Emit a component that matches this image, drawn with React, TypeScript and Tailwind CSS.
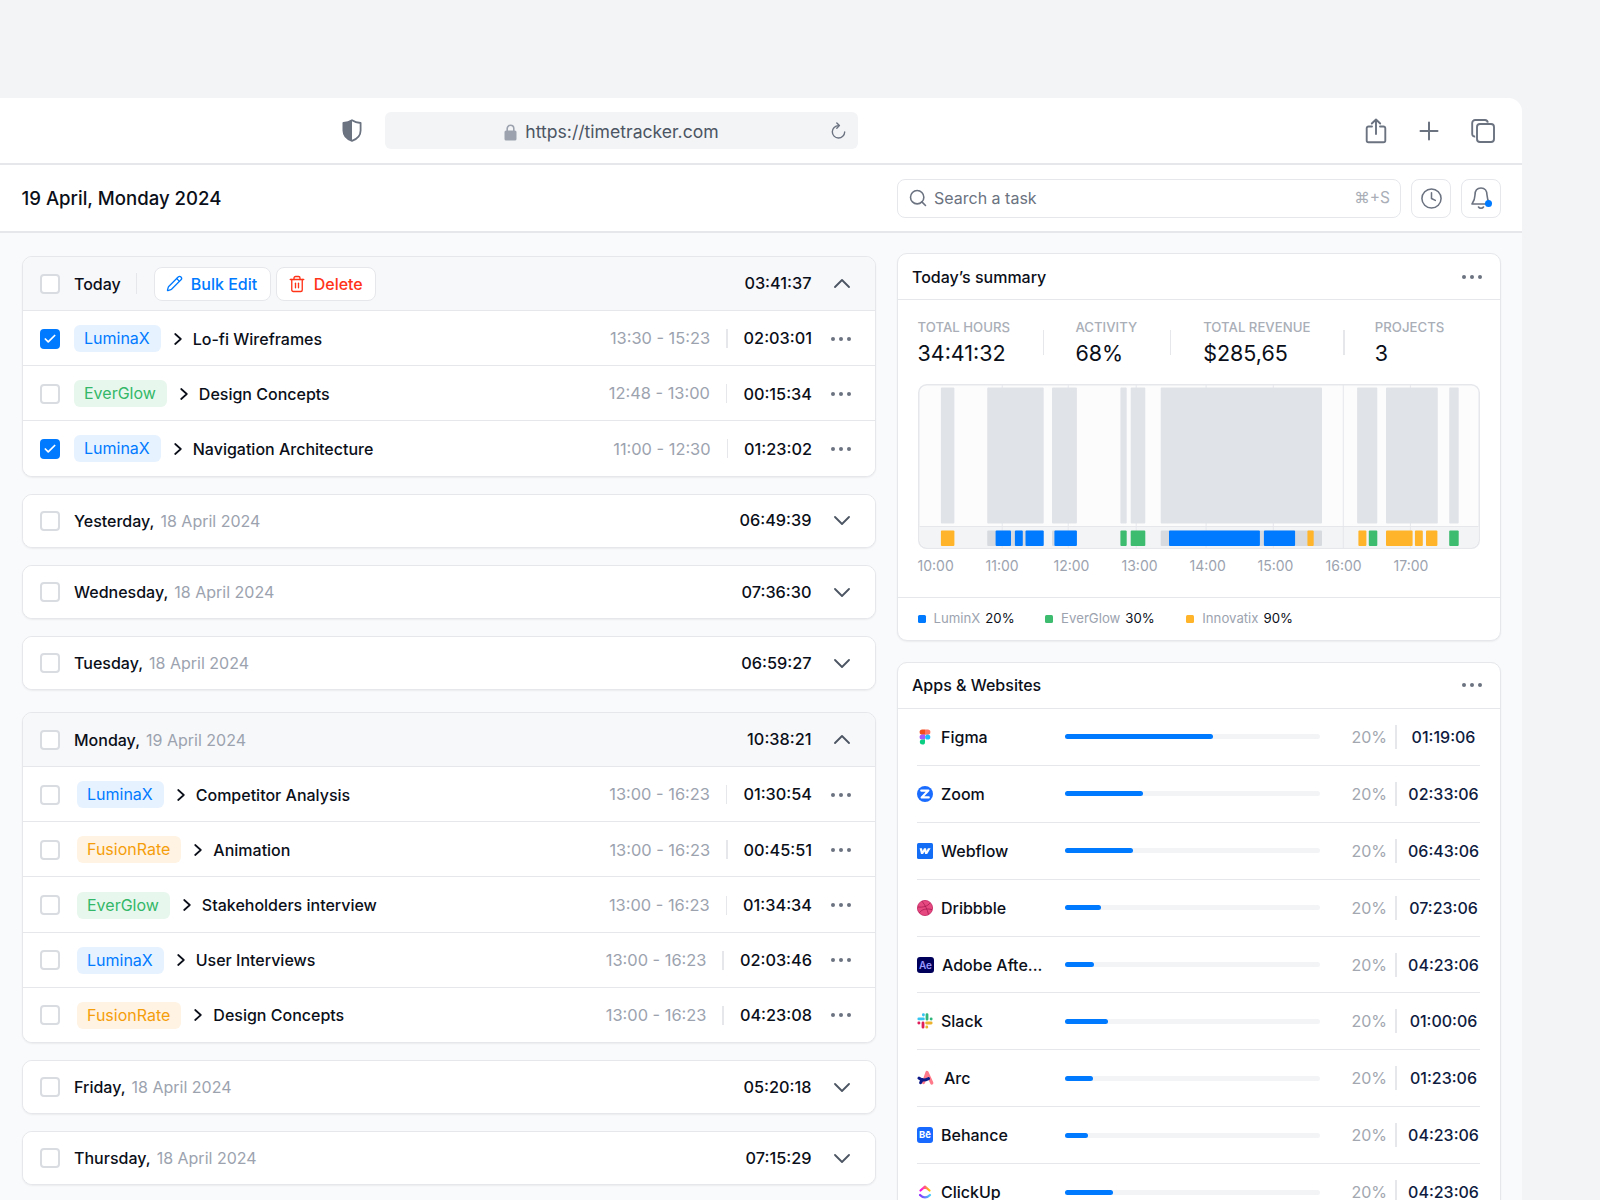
import React from "react";
import { Check, Search, Clock, Pencil, Trash2 } from "lucide-react";

const tagStyles: Record<string, string> = {
  LuminaX: "bg-[#e6f2ff] text-[#007aff]",
  EverGlow: "bg-[#e8f7ee] text-[#34b768]",
  FusionRate: "bg-[#fff3e3] text-[#f59e0b]",
};

function Box({ checked }: { checked?: boolean }) {
  if (checked) {
    return (
      <span className="flex h-5 w-5 shrink-0 items-center justify-center rounded-[4px] bg-[#007aff]">
        <Check size={14} strokeWidth={3} className="text-white" />
      </span>
    );
  }
  return <span className="block h-5 w-5 shrink-0 rounded-[4px] border-2 border-[#d9dce1] bg-white" />;
}

function Dots({ className }: { className?: string }) {
  return (
    <span className={"flex w-5 shrink-0 items-center justify-between " + (className ?? "")}>
      <span className="h-1 w-1 rounded-full bg-[#6b7280]" />
      <span className="h-1 w-1 rounded-full bg-[#6b7280]" />
      <span className="h-1 w-1 rounded-full bg-[#6b7280]" />
    </span>
  );
}

function Chevron({ up }: { up?: boolean }) {
  return (
    <span className="ml-5 flex w-5 shrink-0 justify-center">
      <svg width="16" height="9" viewBox="0 0 16 9" fill="none" stroke="#4b5563" strokeWidth="1.8" strokeLinecap="round" strokeLinejoin="round">
        {up ? <path d="M1 8 L8 1 L15 8" /> : <path d="M1 1 L8 8 L15 1" />}
      </svg>
    </span>
  );
}

type Row = { tag: string; title: string; range: string; dur: string; checked?: boolean };

function TaskRow({ row, gap }: { row: Row; gap: string }) {
  return (
    <div className="flex h-[55.2px] items-center border-t-[1.5px] border-[#e5e7eb] bg-white pl-[17.5px] pr-6 pt-[1px]">
      <Box checked={row.checked} />
      <span className={"rounded-md py-[2px] pl-[10px] pr-[11px] leading-[23px] " + gap + " " + tagStyles[row.tag]}>{row.tag}</span>
      <svg className="ml-[13px] shrink-0" width="8" height="12" viewBox="0 0 8 12" fill="none" stroke="#0b0f19" strokeWidth="1.7" strokeLinecap="round" strokeLinejoin="round">
        <path d="M1.2 1 L6.8 6 L1.2 11" />
      </svg>
      <span className="ml-[11px] font-medium text-[#0b0f19]">{row.title}</span>
      <span className="ml-auto whitespace-nowrap text-[16.4px] text-[#9ca3af]">{row.range}</span>
      <span className="ml-4 h-[19px] w-[1.5px] bg-[#e5e7eb]" />
      <span className="ml-4 text-[16.3px] font-medium text-[#0b0f19]">{row.dur}</span>
      <Dots className="ml-[18.5px]" />
    </div>
  );
}

function DayHead({ day, date, dur, open, shaded }: { day: string; date: string; dur: string; open?: boolean; shaded?: boolean }) {
  return (
    <div className={"flex items-center pl-[17.5px] pr-[23px] " + (shaded ? "h-[53px] bg-[#f7f8fa]" : "h-[52px] bg-white")}>
      <Box />
      <span className="ml-[14px] font-medium text-[#0b0f19]">{day},</span>
      <span className="ml-[6px] text-[#9ca3af]">{date}</span>
      <span className="ml-auto text-[16.3px] font-medium text-[#0b0f19]">{dur}</span>
      <Chevron up={open} />
    </div>
  );
}

const todayRows: Row[] = [
  { tag: "LuminaX", title: "Lo-fi Wireframes", range: "13:30 - 15:23", dur: "02:03:01", checked: true },
  { tag: "EverGlow", title: "Design Concepts", range: "12:48 - 13:00", dur: "00:15:34" },
  { tag: "LuminaX", title: "Navigation Architecture", range: "11:00 - 12:30", dur: "01:23:02", checked: true },
];

const mondayRows: Row[] = [
  { tag: "LuminaX", title: "Competitor Analysis", range: "13:00 - 16:23", dur: "01:30:54" },
  { tag: "FusionRate", title: "Animation", range: "13:00 - 16:23", dur: "00:45:51" },
  { tag: "EverGlow", title: "Stakeholders interview", range: "13:00 - 16:23", dur: "01:34:34" },
  { tag: "LuminaX", title: "User Interviews", range: "13:00 - 16:23", dur: "02:03:46" },
  { tag: "FusionRate", title: "Design Concepts", range: "13:00 - 16:23", dur: "04:23:08" },
];

const cardClass = "overflow-hidden rounded-[10px] border-[1.5px] border-[#e5e7eb] bg-white shadow-[0_1px_2px_rgba(17,24,39,0.06)]";

const upper: [number, number][] = [
  [22.5, 36], [68.8, 125.3], [133.6, 158.5], [202, 208.3], [212.3, 226.9], [242.3, 403.6], [438.7, 458.9], [467.6, 519.4], [530.8, 540.3],
];
const bandGrey: [number, number][] = [[68.8, 125.3], [133.6, 158.5], [242.3, 403.6]];
const BLUE = "#007aff";
const GREEN = "#3dbb6e";
const AMBER = "#ffb429";
const lower: [number, number, string][] = [
  [22.5, 36, AMBER],
  [77.2, 92.6, BLUE], [96.5, 104.4, BLUE], [107.1, 125.3, BLUE],
  [136, 158.5, BLUE],
  [202, 208.3, GREEN], [212.3, 226.9, GREEN],
  [250.6, 341.5, BLUE], [345.5, 376.7, BLUE], [389, 395.3, AMBER],
  [440, 448, AMBER], [450.4, 458.9, GREEN],
  [467.6, 494.2, AMBER], [496.5, 504.4, AMBER], [507.6, 519, AMBER],
  [530.8, 540.3, GREEN],
];
const grid = [83.8, 149.8, 217.8, 287.7, 354.9, 424.9, 492];

function Chart() {
  return (
    <svg className="mt-[17px] block" width="562" height="165" viewBox="0 0 562 165">
      <rect x="0.75" y="0.75" width="560.5" height="163.5" rx="8" fill="#fcfcfd" stroke="#e5e7eb" strokeWidth="1.5" />
      <path d="M1.5 142.5 H560.5 V156 a7.5 7.5 0 0 1 -7.5 7.5 H9 a7.5 7.5 0 0 1 -7.5 -7.5 Z" fill="#f3f4f6" />
      <line x1="1.5" x2="560.5" y1="142.5" y2="142.5" stroke="#e5e7eb" strokeWidth="1.2" />
      <g transform="translate(0.4 0)">
        {grid.map((x) => (
          <line key={x} x1={x} x2={x} y1="1" y2="164" stroke="#e5e7eb" strokeWidth="1" />
        ))}
        {upper.map(([a, b]) => (
          <rect key={a} x={a} y="3.5" width={b - a} height="136" rx="1" fill="#e0e3e8" />
        ))}
        {bandGrey.map(([a, b]) => (
          <rect key={a} x={a} y="146.5" width={b - a} height="15.5" rx="1" fill="#d7dbe0" />
        ))}
        {lower.map(([a, b, c]) => (
          <rect key={a} x={a} y="146.5" width={b - a} height="15.5" rx="1" fill={c} />
        ))}
      </g>
    </svg>
  );
}

function Stat({ label, value }: { label: string; value: string }) {
  return (
    <div>
      <div className="whitespace-nowrap text-[13.2px] font-medium leading-4 text-[#a9aeb7]">{label}</div>
      <div className="mt-1 text-[21.5px] font-normal leading-7 text-[#0b0f19]">{value}</div>
    </div>
  );
}

function StatDivider({ className }: { className: string }) {
  return <span className={"mb-[12px] h-[25px] w-[1.5px] self-end bg-[#e5e7eb] " + className} />;
}

function Legend({ color, name, value, className }: { color: string; name: string; value: string; className?: string }) {
  return (
    <div className={"flex items-center text-[13.2px] " + (className ?? "")}>
      <span className={"h-2 w-2 rounded-[1.5px] " + color} />
      <span className="ml-2 text-[#9ca3af]">{name}</span>
      <span className="ml-[5px] text-[#0b0f19]">{value}</span>
    </div>
  );
}

const FigmaIcon = () => (
  <svg width="16" height="16" viewBox="0 0 16 16">
    <path d="M8 0.5 H5.2 a2.6 2.6 0 0 0 0 5.2 H8 Z" fill="#f24e1e" />
    <path d="M8 0.5 h2.8 a2.6 2.6 0 0 1 0 5.2 H8 Z" fill="#ff7262" />
    <path d="M8 5.4 H5.2 a2.6 2.6 0 0 0 0 5.2 H8 Z" fill="#a259ff" />
    <circle cx="10.7" cy="8" r="2.6" fill="#1abcfe" />
    <path d="M5.2 10.4 H8 V12.9 a2.6 2.6 0 1 1 -2.8 -2.5 Z" fill="#0acf83" />
  </svg>
);
const ZoomIcon = () => (
  <svg width="16" height="16" viewBox="0 0 16 16">
    <circle cx="8" cy="8" r="8" fill="#1a6cff" />
    <path d="M4.2 4.6 H11.4 L4.6 11.4 H11.8" fill="none" stroke="#fff" strokeWidth="2.1" strokeLinecap="round" strokeLinejoin="round" />
  </svg>
);
const WebflowIcon = () => (
  <svg width="16" height="16" viewBox="0 0 16 16">
    <rect width="16" height="16" rx="1.5" fill="#146ef5" />
    <path d="M2.6 5.2 H5 L5.6 8 L7 5.2 H9 L9.6 8 L10.9 5.2 H13.6 L10.2 11 H8.1 L7.5 8.4 L6.1 11 H4 Z" fill="#fff" />
  </svg>
);
const DribbbleIcon = () => (
  <svg width="16" height="16" viewBox="0 0 16 16">
    <circle cx="8" cy="8" r="7.6" fill="#e6497f" stroke="#c32361" strokeWidth="0.8" />
    <path d="M5 1.2 C8 5 10.5 9.5 11.5 14.5 M1 7 C6 7.5 10.5 6.5 13.2 2.8 M2.2 13 C4.5 9.5 9 8 15 9.6" fill="none" stroke="#a81b52" strokeWidth="0.8" />
  </svg>
);
const AeIcon = () => (
  <span className="flex h-4 w-[17px] items-center justify-center rounded-[3px] bg-[#00005b] text-[10px] font-semibold leading-none text-[#9999ff]">Ae</span>
);
const SlackIcon = () => (
  <svg width="16" height="16" viewBox="0 0 16 16">
    <g fill="none" strokeWidth="2.8" strokeLinecap="round">
      <path d="M6.4 5.9 H1.8 M6.4 1.6 V2" stroke="#36c5f0" />
      <path d="M10 1.6 V6.2 M14.2 6 H14.1" stroke="#2eb67d" />
      <path d="M9.6 10 H14.2 M9.8 14.2 V14" stroke="#ecb22e" />
      <path d="M6 9.8 V14.2 M1.8 10 H2" stroke="#e01e5a" />
    </g>
  </svg>
);
const ArcIcon = () => (
  <svg width="17" height="16" viewBox="0 0 17 16">
    <path d="M6.5 12.5 L10 2.5 L14.8 13" fill="none" stroke="#ff7a8a" strokeWidth="3.2" strokeLinecap="round" strokeLinejoin="round" />
    <path d="M2 8.2 C4.5 10.4 8 10.4 11.5 8.6" fill="none" stroke="#0c1a8a" strokeWidth="3" strokeLinecap="round" />
    <path d="M3.6 12.6 L5.2 9.6" fill="none" stroke="#0c1a8a" strokeWidth="3" strokeLinecap="round" />
  </svg>
);
const BehanceIcon = () => (
  <span className="flex h-4 w-4 items-center justify-center rounded-[3px] bg-[#1769ff] text-[9.5px] font-bold leading-none text-white">Bē</span>
);
const ClickUpIcon = () => (
  <svg width="16" height="16" viewBox="0 0 16 16">
    <defs>
      <linearGradient id="cu1" x1="0" y1="0" x2="1" y2="0">
        <stop offset="0" stopColor="#ff02f0" />
        <stop offset="1" stopColor="#ffc800" />
      </linearGradient>
      <linearGradient id="cu2" x1="0" y1="0" x2="1" y2="0">
        <stop offset="0" stopColor="#8930fd" />
        <stop offset="1" stopColor="#49ccf9" />
      </linearGradient>
    </defs>
    <path d="M3.5 6.5 L8 2.6 L12.5 6.5" fill="none" stroke="url(#cu1)" strokeWidth="2.2" strokeLinecap="round" strokeLinejoin="round" />
    <path d="M3 11 C6 14.2 10 14.2 13 11" fill="none" stroke="url(#cu2)" strokeWidth="2.2" strokeLinecap="round" />
  </svg>
);

type App = { name: string; icon: React.ReactNode; bar: number; time: string; gap: string };
const apps: App[] = [
  { name: "Figma", icon: <FigmaIcon />, bar: 148, time: "01:19:06", gap: "ml-2" },
  { name: "Zoom", icon: <ZoomIcon />, bar: 78, time: "02:33:06", gap: "ml-2" },
  { name: "Webflow", icon: <WebflowIcon />, bar: 68, time: "06:43:06", gap: "ml-2" },
  { name: "Dribbble", icon: <DribbbleIcon />, bar: 36, time: "07:23:06", gap: "ml-2" },
  { name: "Adobe Afte...", icon: <AeIcon />, bar: 29, time: "04:23:06", gap: "ml-2" },
  { name: "Slack", icon: <SlackIcon />, bar: 43, time: "01:00:06", gap: "ml-2" },
  { name: "Arc", icon: <ArcIcon />, bar: 28, time: "01:23:06", gap: "ml-[10px]" },
  { name: "Behance", icon: <BehanceIcon />, bar: 23, time: "04:23:06", gap: "ml-2" },
  { name: "ClickUp", icon: <ClickUpIcon />, bar: 48, time: "04:23:06", gap: "ml-2" },
];

export default function App() {
  return (
    <div className="h-[1200px] overflow-hidden bg-[#f3f4f6] pt-[98px] font-['Inter',sans-serif] text-base text-[#0b0f19]">
      <div className="h-[1102px] w-[1522px] overflow-hidden rounded-tr-[14px] bg-[#f9fafb]">
        {/* Browser bar */}
        <div className="flex h-[67px] items-center border-b-2 border-[#e5e7eb] bg-white pl-[342px] pr-[27px]">
          <svg width="20" height="23" viewBox="0 0 20 23" className="shrink-0">
            <path d="M10 1.2 C12.6 2.9 15.4 3.7 18.6 4 V11.5 C18.6 16.4 15.3 20 10 21.8 C4.7 20 1.4 16.4 1.4 11.5 V4 C4.6 3.7 7.4 2.9 10 1.2 Z" fill="#fff" stroke="#6b7280" strokeWidth="1.8" strokeLinejoin="round" />
            <path d="M10 1.2 C7.4 2.9 4.6 3.7 1.4 4 V11.5 C1.4 16.4 4.7 20 10 21.8 Z" fill="#6b7280" />
          </svg>
          <div className="relative ml-[23px] flex h-[37px] w-[473px] items-center justify-center rounded-md bg-[#f3f4f6] pr-5 pt-[3px] text-[17.6px] text-[#4b5563]">
            <svg width="13" height="17" viewBox="0 0 13 17" className="mr-2 shrink-0">
              <path d="M3.2 7 V4.6 a3.3 3.3 0 0 1 6.6 0 V7" fill="none" stroke="#9ca3af" strokeWidth="1.6" />
              <rect x="0.5" y="6.5" width="12" height="10" rx="1.6" fill="#9ca3af" />
            </svg>
            <span>https://timetracker.com</span>
            <svg className="absolute right-[11px] top-[10px]" width="17" height="18" viewBox="0 0 17 18" fill="none" stroke="#6b7280" strokeWidth="1.4" strokeLinecap="round" strokeLinejoin="round">
              <path d="M8.5 3.6 a6.2 6.2 0 1 0 6.2 6.4" />
              <path d="M6.8 1 L9.4 3.6 L6.8 6.2" />
            </svg>
          </div>
          <div className="ml-auto flex items-center gap-[32px]">
            <svg width="22" height="26" viewBox="0 0 22 26" fill="none" stroke="#6b7280" strokeWidth="1.9" strokeLinecap="round" strokeLinejoin="round">
              <path d="M7 8.5 H3.5 a1.8 1.8 0 0 0 -1.8 1.8 V22.5 a1.8 1.8 0 0 0 1.8 1.8 H18.5 a1.8 1.8 0 0 0 1.8 -1.8 V10.3 a1.8 1.8 0 0 0 -1.8 -1.8 H15" />
              <path d="M11 16 V1.5 M6.8 5.5 L11 1.5 L15.2 5.5" />
            </svg>
            <svg width="20" height="20" viewBox="0 0 20 20" fill="none" stroke="#6b7280" strokeWidth="2" strokeLinecap="round">
              <path d="M10 1.5 V18.5 M1.5 10 H18.5" />
            </svg>
            <svg width="24" height="24" viewBox="0 0 24 24" fill="none" stroke="#6b7280" strokeWidth="1.9" strokeLinejoin="round">
              <path d="M4.2 17.5 A2.6 2.6 0 0 1 1.2 15 V4 A3 3 0 0 1 4.2 1 H14 A3 3 0 0 1 16.8 3.6" />
              <rect x="6" y="5" width="17" height="18" rx="3" />
            </svg>
          </div>
        </div>

        {/* Page header */}
        <div className="flex h-[68px] items-center border-b-2 border-[#e5e7eb] bg-white pl-[21.5px] pr-[21px]">
          <h1 className="pt-[2px] text-[18.6px] font-medium text-[#0b0f19]">19 April, Monday 2024</h1>
          <div className="ml-auto flex items-center gap-[10px]">
            <div className="flex h-[39px] w-[504px] items-center rounded-lg border-[1.5px] border-[#e5e7eb] bg-white pl-[10px] pr-[10px]">
              <Search size={20} strokeWidth={1.9} className="text-[#6b7280]" />
              <span className="ml-[6px] text-[#6b7280]">Search a task</span>
              <span className="ml-auto text-[15.5px] text-[#a9aeb7]">⌘+S</span>
            </div>
            <div className="flex h-[39px] w-10 items-center justify-center rounded-lg border-[1.5px] border-[#e5e7eb] bg-white">
              <Clock size={23} strokeWidth={1.6} className="text-[#6b7280]" />
            </div>
            <div className="relative flex h-[39px] w-10 items-center justify-center rounded-lg border-[1.5px] border-[#e5e7eb] bg-white">
              <svg width="22" height="24" viewBox="0 0 22 24" fill="none" stroke="#6b7280" strokeWidth="1.6" strokeLinecap="round" strokeLinejoin="round">
                <path d="M11 2 C7 2 5 5 5 9 C5 13 4 15 2 18 H20 C18 15 17 13 17 9 C17 5 15 2 11 2 Z" />
                <path d="M8.5 21 C9.5 22.6 12.5 22.6 13.5 21" />
              </svg>
              <span className="absolute left-[23px] top-[20px] h-[7px] w-[7px] rounded-full bg-[#007aff]" />
            </div>
          </div>
        </div>

        {/* Body */}
        <div className="flex gap-[21.5px] pl-[21.5px] pr-[21px]">
          <div className="w-[854px] shrink-0 pt-[23px]">
            <div className={cardClass}>
              <div className="flex h-[53px] items-center bg-[#f7f8fa] pl-[17.5px] pr-[23px]">
                <Box />
                <span className="ml-[14px] font-medium text-[#0b0f19]">Today</span>
                <span className="ml-[15px] h-[21px] w-[1.5px] bg-[#e5e7eb]" />
                <button className="ml-[16.5px] flex h-[34px] items-center rounded-lg border-[1.5px] border-[#e5e7eb] bg-white pl-[11px] pr-[13px] font-medium text-[#007aff]">
                  <Pencil size={17} strokeWidth={1.8} />
                  <span className="ml-2">Bulk Edit</span>
                </button>
                <button className="ml-[4.5px] flex h-[34px] items-center rounded-lg border-[1.5px] border-[#e5e7eb] bg-white pl-[11px] pr-[12px] font-medium text-[#ff3318]">
                  <Trash2 size={18} strokeWidth={1.8} />
                  <span className="ml-2">Delete</span>
                </button>
                <span className="ml-auto text-[16.3px] font-medium text-[#0b0f19]">03:41:37</span>
                <Chevron up />
              </div>
              {todayRows.map((r) => (
                <TaskRow key={r.title} row={r} gap="ml-[14px]" />
              ))}
            </div>

            <div className={"mt-[17px] " + cardClass}>
              <DayHead day="Yesterday" date="18 April 2024" dur="06:49:39" />
            </div>
            <div className={"mt-[17.5px] " + cardClass}>
              <DayHead day="Wednesday" date="18 April 2024" dur="07:36:30" />
            </div>
            <div className={"mt-[17px] " + cardClass}>
              <DayHead day="Tuesday" date="18 April 2024" dur="06:59:27" />
            </div>

            <div className={"mt-[22px] " + cardClass}>
              <DayHead day="Monday" date="19 April 2024" dur="10:38:21" open shaded />
              {mondayRows.map((r) => (
                <TaskRow key={r.title + r.dur} row={r} gap="ml-[17px]" />
              ))}
            </div>

            <div className={"mt-[17px] " + cardClass}>
              <DayHead day="Friday" date="18 April 2024" dur="05:20:18" />
            </div>
            <div className={"mt-[17px] " + cardClass}>
              <DayHead day="Thursday" date="18 April 2024" dur="07:15:29" />
            </div>
          </div>

          <div className="w-[604px] shrink-0 pt-5">
            <div className={cardClass}>
              <div className="flex h-[46px] items-center border-b-[1.5px] border-[#e5e7eb] pl-[14px] pr-[18px]">
                <span className="font-medium text-[#0b0f19]">Today’s summary</span>
                <Dots className="ml-auto" />
              </div>
              <div className="px-[19.5px]">
                <div className="flex pt-[19px]">
                  <Stat label="TOTAL HOURS" value="34:41:32" />
                  <StatDivider className="ml-[33px] mr-[31px]" />
                  <Stat label="ACTIVITY" value="68%" />
                  <StatDivider className="ml-[32.5px] mr-8" />
                  <Stat label="TOTAL REVENUE" value="$285,65" />
                  <StatDivider className="ml-[33px] mr-[30px]" />
                  <Stat label="PROJECTS" value="3" />
                </div>
                <Chart />
                <div className="mt-[7px] flex text-sm leading-5 text-[#9ca3af]">
                  {["10:00", "11:00", "12:00", "13:00", "14:00", "15:00", "16:00", "17:00"].map((t) => (
                    <span key={t} className="w-[68px]">{t}</span>
                  ))}
                </div>
              </div>
              <div className="mt-[21px] flex h-[43px] items-center border-t-[1.5px] border-[#e5e7eb] px-[19.5px]">
                <Legend color="bg-[#007aff]" name="LuminX" value="20%" />
                <Legend color="bg-[#3dbb6e]" name="EverGlow" value="30%" className="ml-[30.5px]" />
                <Legend color="bg-[#ffb429]" name="Innovatix" value="90%" className="ml-[31.5px]" />
              </div>
            </div>

            <div className={"mt-[21px] " + cardClass}>
              <div className="flex h-[46px] items-center border-b-[1.5px] border-[#e5e7eb] pb-[2px] pl-[14px] pr-[18px]">
                <span className="font-medium text-[#0b0f19]">Apps &amp; Websites</span>
                <Dots className="ml-auto" />
              </div>
              <div className="pl-[19px] pr-5">
                {apps.map((a) => (
                  <div key={a.name} className="flex h-[56.9px] items-center border-b-[1.5px] border-[#e5e7eb]">
                    <div className="flex w-[147.5px] shrink-0 items-center">
                      <span className="shrink-0">{a.icon}</span>
                      <span className={"whitespace-nowrap font-medium text-[#0b0f19] " + a.gap}>{a.name}</span>
                    </div>
                    <div className="h-[5px] w-[255px] shrink-0 rounded-full bg-[#f3f4f6]">
                      <div className="h-full rounded-full bg-[#007aff]" style={{ width: a.bar }} />
                    </div>
                    <span className="ml-8 w-8 shrink-0 text-[#a2a7b0]">20%</span>
                    <span className="ml-[11.5px] h-6 w-[1.5px] shrink-0 bg-[#e5e7eb]" />
                    <span className="ml-[11.5px] w-[71px] shrink-0 whitespace-nowrap text-center font-medium text-[#0f1c3f]">{a.time}</span>
                  </div>
                ))}
              </div>
            </div>
          </div>
        </div>
      </div>
    </div>
  );
}
